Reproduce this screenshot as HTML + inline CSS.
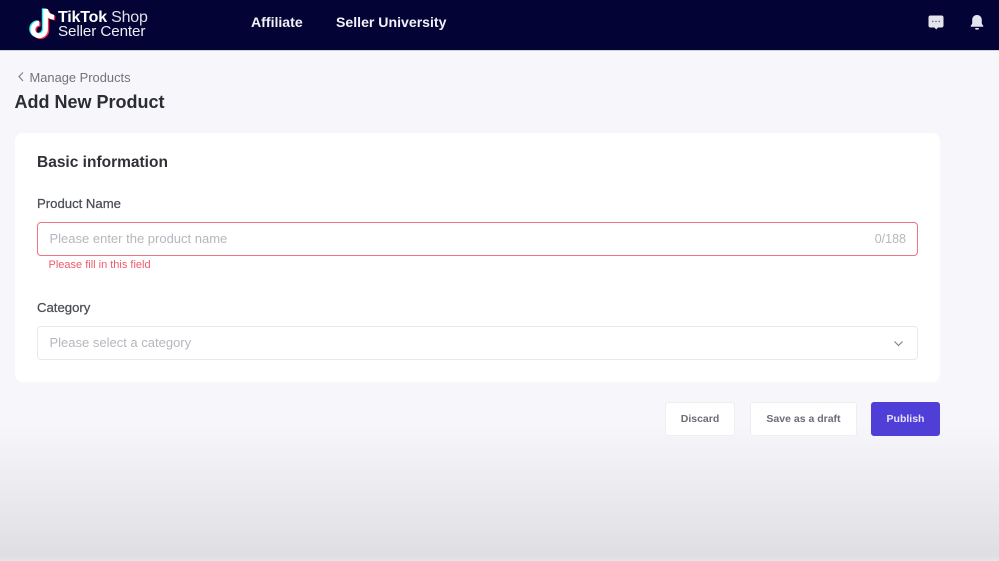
<!DOCTYPE html>
<html><head><meta charset="utf-8"><style>
html,body{margin:0;padding:0}
body{width:999px;height:561px;overflow:hidden;position:relative;font-family:"Liberation Sans",sans-serif;background:linear-gradient(180deg,#f6f6fb 0,#f6f6fb 425px,#efeff3 470px,#e5e5e9 525px,#dfdfe3 556px,#e6e6ea 561px)}
.t{position:absolute;white-space:nowrap;line-height:1}
.hdr{position:absolute;left:0;top:0;width:999px;height:50px;background:#040335;border-bottom:1px solid #cfcfe0}
.box{position:absolute;box-sizing:border-box;background:#fff}
.btn{position:absolute;box-sizing:border-box;background:#fff;border:1px solid #eeeef2;border-radius:3px;text-align:center;font-size:10.500px;font-weight:bold;color:#6a6d75;line-height:32px;height:34px;top:402px}
</style></head><body>
<div class="hdr"></div>
<svg style="position:absolute;left:29px;top:6px" width="28" height="33" viewBox="0 0 28 33">
<g fill="none" stroke-width="4.800">
<path d="M16.500 3V23.500a6.300 6.300 0 1 1-6.300-6.300M16.500 4c.8 4 3.600 6.800 8.500 7.200" stroke="#25f4ee" transform="translate(-1.300,-.6)"/>
<path d="M16.500 3V23.500a6.300 6.300 0 1 1-6.300-6.300M16.500 4c.8 4 3.600 6.800 8.500 7.200" stroke="#fe2c55" transform="translate(1.300,.9)"/>
<path d="M16.500 3V23.500a6.300 6.300 0 1 1-6.300-6.300M16.500 4c.8 4 3.600 6.800 8.500 7.200" stroke="#fff"/>
</g></svg>
<div class="t" style="left:58px;top:10px;font-size:16px;font-weight:bold;color:#fff;letter-spacing:-.2px">TikTok <span style="font-weight:normal;color:#e0e0ea">Shop</span></div>
<div class="t" style="left:58px;top:24px;font-size:15.200px;color:#eeeef5;letter-spacing:-.1px">Seller Center</div>
<div class="t" style="left:251px;top:15px;font-size:14.100px;font-weight:bold;color:#f2f2f8">Affiliate</div>
<div class="t" style="left:336px;top:15px;font-size:14.100px;font-weight:bold;color:#f2f2f8">Seller University</div>
<svg style="position:absolute;left:928px;top:15px" width="16" height="16" viewBox="0 0 16 16"><path d="M2.500 0.500h11a2 2 0 0 1 2 2v8a2 2 0 0 1-2 2H10l-1.800 2-1.800-2H2.500a2 2 0 0 1-2-2v-8a2 2 0 0 1 2-2z" fill="#e4e4ec"/><circle cx="4.800" cy="6.400" r=".8" fill="#667"/><circle cx="8" cy="6.400" r=".8" fill="#667"/><circle cx="11.200" cy="6.400" r=".8" fill="#667"/></svg>
<svg style="position:absolute;left:970px;top:14px" width="14" height="17" viewBox="0 0 14 17"><path d="M7 1c3 0 4.800 2.300 4.800 5v3.600l1.400 2.200v.9H.8v-.9l1.400-2.200V6C2.200 3.300 4 1 7 1z" fill="#e4e4ee"/><path d="M5 14h4l-.6 1.600h-2.800z" fill="#e4e4ee"/></svg>

<svg style="position:absolute;left:17px;top:71px" width="9" height="12" viewBox="0 0 9 12"><path d="M6 1.500 2 5.500l4 4.500" fill="none" stroke="#777a82" stroke-width="1.100"/></svg>
<div class="t" style="left:29.500px;top:72px;font-size:12.900px;color:#71747c">Manage Products</div>
<div class="t" style="left:14.500px;top:93px;font-size:18px;font-weight:bold;color:#2b2d34">Add New Product</div>

<div class="box" style="left:15px;top:133px;width:925px;height:249px;border-radius:8px"></div>
<div class="t" style="left:37px;top:155px;font-size:15.500px;font-weight:bold;color:#2f3138">Basic information</div>
<div class="t" style="left:37px;top:197px;font-size:13.150px;color:#4a4d55;-webkit-text-stroke:.25px #4a4d55">Product Name</div>
<div class="box" style="left:37px;top:222px;width:881px;height:34px;border:1.300px solid #ee7482;border-radius:4px"></div>
<div class="t" style="left:49.500px;top:232px;font-size:13px;color:#b4b7bd">Please enter the product name</div>
<div class="t" style="right:93px;top:233px;font-size:12.500px;color:#b4b7bd">0/188</div>
<div class="t" style="left:48.500px;top:260px;font-size:11px;color:#f0596c">Please fill in this field</div>
<div class="t" style="left:37px;top:301px;font-size:13.150px;color:#4a4d55;-webkit-text-stroke:.25px #4a4d55">Category</div>
<div class="box" style="left:37px;top:326px;width:881px;height:34px;border:1px solid #e9e9ed;border-radius:4px"></div>
<div class="t" style="left:49.500px;top:336px;font-size:13px;color:#b4b7bd">Please select a category</div>
<svg style="position:absolute;left:893px;top:339px" width="11" height="9" viewBox="0 0 11 9"><path d="M1.500 2.500 5.500 6.500l4-4" fill="none" stroke="#7c7f86" stroke-width="1.100"/></svg>

<div class="btn" style="left:665px;width:70px">Discard</div>
<div class="btn" style="left:750px;width:107px">Save as a draft</div>
<div class="btn" style="left:871px;width:69px;background:#4f3fd6;border-color:#4f3fd6;color:#e6e3fb">Publish</div>
</body></html>
